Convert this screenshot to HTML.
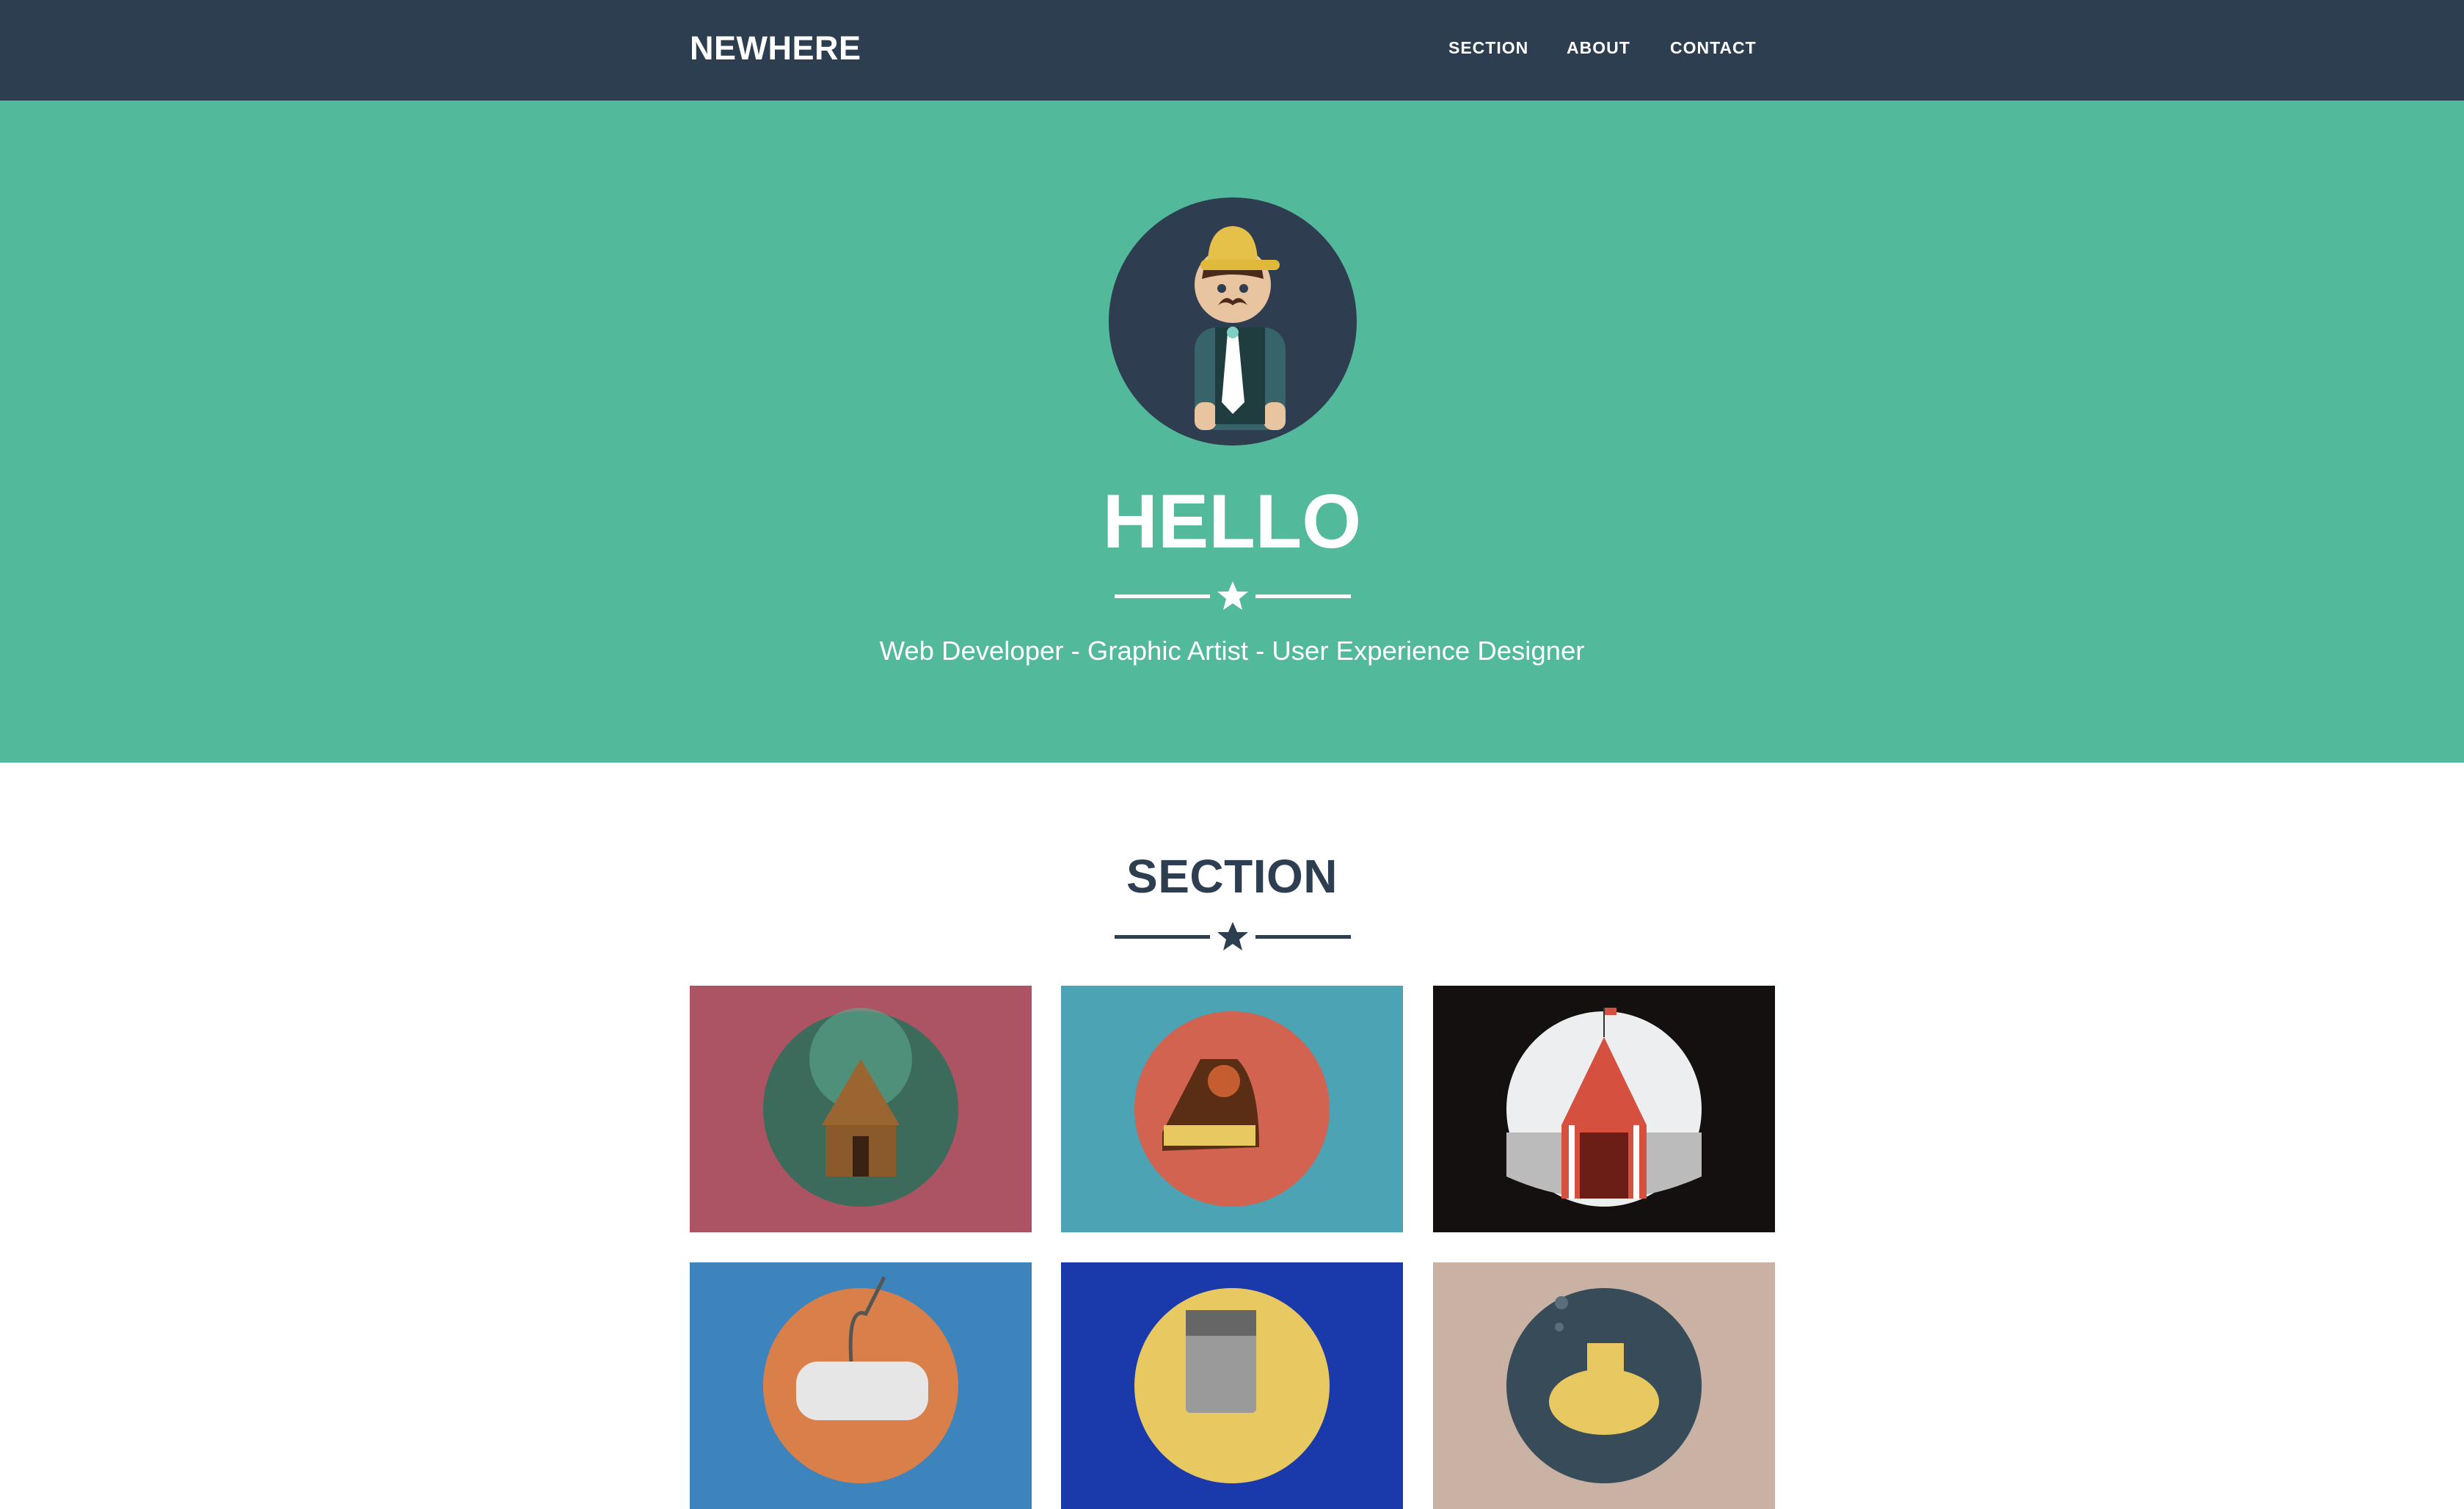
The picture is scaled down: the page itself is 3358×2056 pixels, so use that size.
<!DOCTYPE html>
<html><head><meta charset="utf-8"><style>
*{margin:0;padding:0;box-sizing:border-box}
body{width:3358px;height:1902px;overflow:hidden;background:#fff;font-family:"Liberation Sans",sans-serif}
.nav{position:absolute;left:0;top:0;width:3358px;height:137px;background:#2c3e50}
.brand{position:absolute;left:940px;top:40px;color:#fff;font-weight:bold;font-size:45px;letter-spacing:0.5px}
.links a{position:absolute;top:52px;color:#fff;font-weight:bold;font-size:23px;text-decoration:none;letter-spacing:1px}
.hero{position:absolute;left:0;top:137px;width:3358px;height:902px;background:#53b99b}
.hello{position:absolute;left:0;width:3358px;text-align:center;top:652px;color:#fff;font-weight:bold;font-size:104px;letter-spacing:0px}
.sub{position:absolute;left:0;width:3358px;text-align:center;top:866px;color:#fff;font-size:36.5px}
.sec{position:absolute;left:0;width:3358px;text-align:center;top:1157px;color:#2c3e50;font-weight:bold;font-size:64px;letter-spacing:0.5px}
.tile{position:absolute;width:466px;height:336px;overflow:hidden}
.tile svg{position:absolute;left:0;top:0}
</style></head><body>
<div class="nav">
<div class="brand">NEWHERE</div>
<div class="links"><a style="left:1974px">SECTION</a><a style="left:2135px">ABOUT</a><a style="left:2276px">CONTACT</a></div>
</div>
<div class="hero"></div>
<svg style="position:absolute;left:1510px;top:268px" width="340" height="340" viewBox="0 0 340 340">
<circle cx="170" cy="170" r="169" fill="#2e3d50"/>
<rect x="118" y="178" width="124" height="140" rx="30" fill="#37636b"/>
<rect x="118" y="280" width="30" height="38" rx="12" fill="#e8c4a0"/>
<rect x="212" y="280" width="30" height="38" rx="12" fill="#e8c4a0"/>
<rect x="146" y="178" width="68" height="132" fill="#1f3d3f"/>
<polygon points="163,185 177,185 186,280 170,296 155,280" fill="#fff"/>
<circle cx="170" cy="185" r="8" fill="#7fcfc4"/>
<circle cx="170" cy="120" r="52" fill="#e8c4a0"/>
<path d="M130 100 Q170 88 210 100 L212 112 Q170 100 128 112Z" fill="#4a2a1a"/>
<path d="M136 92 Q136 42 170 40 Q204 42 204 92Z" fill="#e6c14a"/>
<rect x="126" y="86" width="108" height="14" rx="7" fill="#e0b93a"/>
<circle cx="155" cy="125" r="6" fill="#2e3d50"/><circle cx="185" cy="125" r="6" fill="#2e3d50"/>
<path d="M150 148 Q160 132 170 142 Q180 132 190 148 Q180 140 170 148 Q160 140 150 148Z" fill="#4a2a1a"/>
</svg>
<div class="hello">HELLO</div>
<svg style="position:absolute;left:1519px;top:790px" width="322" height="44" viewBox="0 0 322 44">
<rect x="0" y="20" width="130" height="5" fill="#fff"/><rect x="192" y="20" width="130" height="5" fill="#fff"/>
<polygon points="161,2 167,16 182,16 170,26 174,41 161,32 148,41 152,26 140,16 155,16" fill="#fff"/>
</svg>
<div class="sub">Web Developer - Graphic Artist - User Experience Designer</div>
<div class="sec">SECTION</div>
<svg style="position:absolute;left:1519px;top:1254px" width="322" height="44" viewBox="0 0 322 44">
<rect x="0" y="20" width="130" height="5" fill="#2c3e50"/><rect x="192" y="20" width="130" height="5" fill="#2c3e50"/>
<polygon points="161,2 167,16 182,16 170,26 174,41 161,32 148,41 152,26 140,16 155,16" fill="#2c3e50"/>
</svg>

<div class="tile" style="left:940px;top:1343px;background:#ad5464"><svg width="466" height="336"><circle cx="233" cy="168" r="133" fill="#3d6b5b"/><circle cx="233" cy="100" r="70" fill="#5aa890" opacity=".6"/><polygon points="233,100 180,190 286,190" fill="#9a6530"/><rect x="185" y="190" width="96" height="70" fill="#8a5a2a"/><rect x="222" y="205" width="22" height="55" fill="#3a2212"/></svg></div>
<div class="tile" style="left:1446px;top:1343px;background:#4ba3b3"><svg width="466" height="336"><circle cx="233" cy="168" r="133" fill="#d26350"/><path d="M138 200 L190 100 L240 100 Q270 130 270 220 L138 225Z" fill="#5a2e14"/><rect x="140" y="190" width="125" height="28" fill="#e8c860"/><circle cx="222" cy="130" r="22" fill="#c45d30"/></svg></div>
<div class="tile" style="left:1953px;top:1343px;background:#141010"><svg width="466" height="336"><circle cx="233" cy="168" r="133" fill="#eceeef"/><path d="M100 200 H366 V260 Q233 320 100 260Z" fill="#bbb"/><polygon points="233,70 175,190 291,190" fill="#d5503e"/><rect x="175" y="190" width="116" height="100" fill="#d5503e"/><rect x="200" y="200" width="66" height="90" fill="#6a1e16"/><rect x="185" y="190" width="8" height="100" fill="#fff"/><rect x="273" y="190" width="8" height="100" fill="#fff"/><rect x="232" y="30" width="2" height="40" fill="#333"/><rect x="234" y="30" width="16" height="10" fill="#d5503e"/></svg></div>
<div class="tile" style="left:940px;top:1720px;background:#3d83bc"><svg width="466" height="336"><circle cx="233" cy="168" r="133" fill="#d9804a"/><rect x="145" y="135" width="180" height="80" rx="30" fill="#e6e6e6"/><path d="M220 135 Q215 60 240 70 Q255 40 265 20" stroke="#555" stroke-width="5" fill="none"/></svg></div>
<div class="tile" style="left:1446px;top:1720px;background:#1a3aab"><svg width="466" height="336"><circle cx="233" cy="168" r="133" fill="#e8c860"/><rect x="170" y="65" width="96" height="140" rx="6" fill="#9a9a9a"/><rect x="170" y="65" width="96" height="35" fill="#666"/></svg></div>
<div class="tile" style="left:1953px;top:1720px;background:#c9b1a3"><svg width="466" height="336"><circle cx="233" cy="168" r="133" fill="#374c58"/><rect x="210" y="110" width="50" height="40" fill="#e8c860"/><ellipse cx="233" cy="190" rx="75" ry="45" fill="#e8c860"/><circle cx="175" cy="55" r="9" fill="#5a6f7b"/><circle cx="172" cy="88" r="6" fill="#5a6f7b"/></svg></div>
</body></html>
